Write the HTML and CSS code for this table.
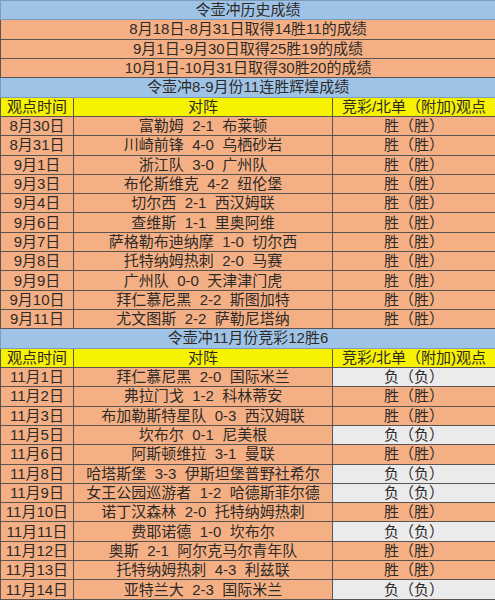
FILE: index.html
```html
<!DOCTYPE html>
<html lang="zh-CN">
<head>
<meta charset="utf-8">
<title>令壶冲历史成绩</title>
<link rel="stylesheet" href="styles.css">
</head>
<body>
<table class="sheet">
  <colgroup>
    <col class="c-date">
    <col class="c-match">
    <col class="c-pick">
  </colgroup>
  <tbody>
    <tr class="band"><td colspan="3">令壶冲历史成绩</td></tr>
    <tr class="record"><td colspan="3">8月18日-8月31日取得14胜11的成绩</td></tr>
    <tr class="record"><td colspan="3">9月1日-9月30日取得25胜19的成绩</td></tr>
    <tr class="record"><td colspan="3">10月1日-10月31日取得30胜20的成绩</td></tr>
    <tr class="band"><td colspan="3">令壶冲8-9月份11连胜辉煌成绩</td></tr>
    <tr class="head"><td>观点时间</td><td>对阵</td><td class="pick-head">竞彩/北单（附加)观点</td></tr>
    <tr class="row"><td>8月30日</td><td>富勒姆  2-1  布莱顿</td><td>胜（胜）</td></tr>
    <tr class="row"><td>8月31日</td><td>川崎前锋  4-0  乌栖砂岩</td><td>胜（胜）</td></tr>
    <tr class="row"><td>9月1日</td><td>浙江队  3-0  广州队</td><td>胜（胜）</td></tr>
    <tr class="row"><td>9月3日</td><td>布伦斯维克  4-2  纽伦堡</td><td>胜（胜）</td></tr>
    <tr class="row"><td>9月4日</td><td>切尔西  2-1  西汉姆联</td><td>胜（胜）</td></tr>
    <tr class="row"><td>9月6日</td><td>查维斯  1-1  里奥阿维</td><td>胜（胜）</td></tr>
    <tr class="row"><td>9月7日</td><td>萨格勒布迪纳摩  1-0  切尔西</td><td>胜（胜）</td></tr>
    <tr class="row"><td>9月8日</td><td>托特纳姆热刺  2-0  马赛</td><td>胜（胜）</td></tr>
    <tr class="row"><td>9月9日</td><td>广州队  0-0  天津津门虎</td><td>胜（胜）</td></tr>
    <tr class="row"><td>9月10日</td><td>拜仁慕尼黑  2-2  斯图加特</td><td>胜（胜）</td></tr>
    <tr class="row"><td>9月11日</td><td>尤文图斯  2-2  萨勒尼塔纳</td><td>胜（胜）</td></tr>
    <tr class="band"><td colspan="3">令壶冲11月份竞彩12胜6</td></tr>
    <tr class="head"><td>观点时间</td><td>对阵</td><td class="pick-head">竞彩/北单（附加)观点</td></tr>
    <tr class="row"><td>11月1日</td><td>拜仁慕尼黑  2-0  国际米兰</td><td class="loss">负（负）</td></tr>
    <tr class="row"><td>11月2日</td><td>弗拉门戈  1-2  科林蒂安</td><td>胜（胜）</td></tr>
    <tr class="row"><td>11月3日</td><td>布加勒斯特星队  0-3  西汉姆联</td><td>胜（胜）</td></tr>
    <tr class="row"><td>11月5日</td><td>坎布尔  0-1  尼美根</td><td class="loss">负（负）</td></tr>
    <tr class="row"><td>11月6日</td><td>阿斯顿维拉  3-1  曼联</td><td>胜（胜）</td></tr>
    <tr class="row"><td>11月8日</td><td>哈塔斯堡  3-3  伊斯坦堡普野社希尔</td><td class="loss">负（负）</td></tr>
    <tr class="row"><td>11月9日</td><td>女王公园巡游者  1-2  哈德斯菲尔德</td><td class="loss">负（负）</td></tr>
    <tr class="row"><td>11月10日</td><td>诺丁汉森林  2-0  托特纳姆热刺</td><td>胜（胜）</td></tr>
    <tr class="row"><td>11月11日</td><td>费耶诺德  1-0  坎布尔</td><td class="loss">负（负）</td></tr>
    <tr class="row"><td>11月12日</td><td>奥斯  2-1  阿尔克马尔青年队</td><td>胜（胜）</td></tr>
    <tr class="row"><td>11月13日</td><td>托特纳姆热刺  4-3  利兹联</td><td>胜（胜）</td></tr>
    <tr class="row"><td>11月14日</td><td>亚特兰大  2-3  国际米兰</td><td class="loss">负（负）</td></tr>
  </tbody>
</table>
</body>
</html>
```

FILE: styles.css
```css
html, body {
  margin: 0;
  padding: 0;
  background: #ffffff;
}

.sheet {
  width: 495px;
  height: 600px;
  border-collapse: collapse;
  table-layout: fixed;
  font-family: "Liberation Sans", "Noto Sans CJK SC", sans-serif;
  font-size: 15px;
  color: #2e2a28;
}

.c-date { width: 73px; }
.c-match { width: 259px; }
.c-pick { width: 163px; }

.sheet td {
  height: 16px;
  padding: 0;
  line-height: 14px;
  text-align: center;
  vertical-align: middle;
  white-space: pre;
  overflow: hidden;
  border: 1px solid #5a5552;
  background: #f4b084;
}

.band td {
  background: #9fc3e7;
  border-color: #7d9cba;
}

.head td {
  background: #f7f300;
}

.pick-head {
  font-size: 15px;
}

.sheet td.loss {
  background: #ebebeb;
}
```
